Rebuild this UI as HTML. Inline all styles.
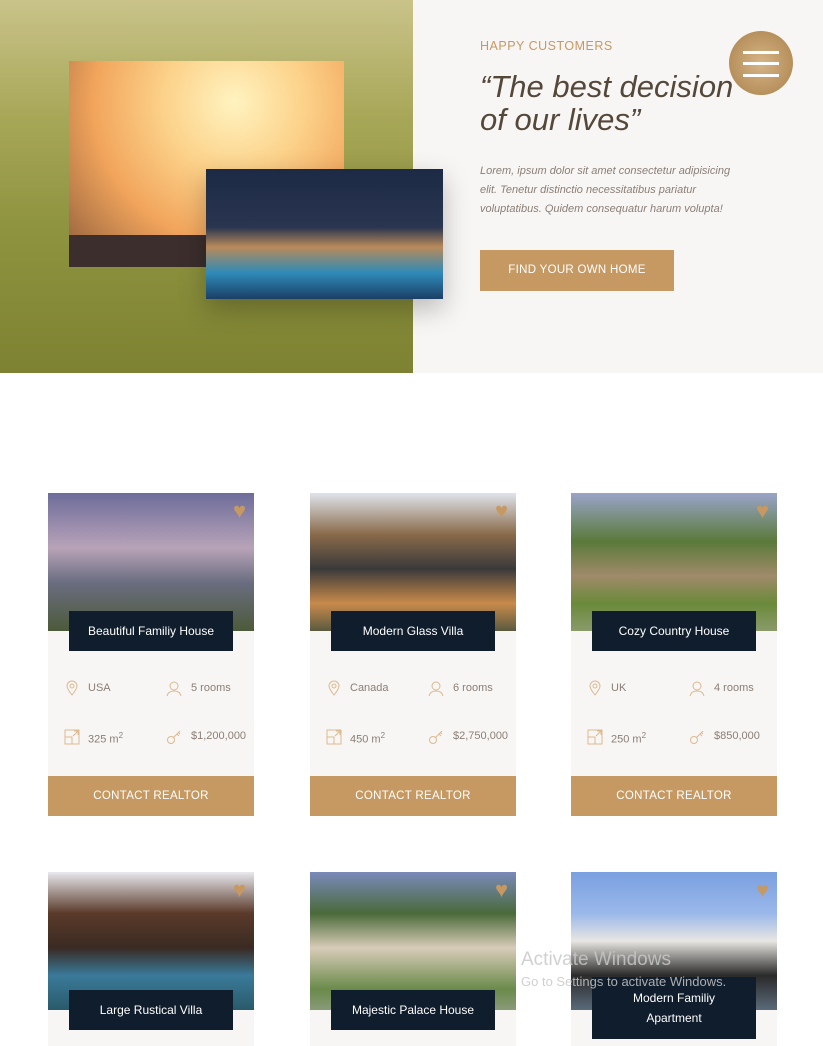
<!DOCTYPE html>
<html style="width:823px;height:1046px;overflow:hidden"><head><style>
*{margin:0;padding:0;box-sizing:border-box}
body{width:823px;height:1046px;overflow:hidden;background:#fff;font-family:"Liberation Sans",sans-serif;position:relative}
.abs{position:absolute}
.hero-l{left:0;top:0;width:413px;height:373px;background:linear-gradient(180deg,#c9c38a 0%,#a9a85a 30%,#8f9440 60%,#7d8232 100%)}
.hero-r{left:413px;top:0;width:410px;height:373px;background:#f8f6f4}
.p1{left:69px;top:61px;width:275px;height:206px;background:radial-gradient(circle at 60% 20%,#fff3c0 0%,#fcd28a 30%,#f2a55c 60%,#8a5a3a 100%)}
.p1 .ground{position:absolute;left:0;bottom:0;width:100%;height:32px;background:#3b2e2c}
.p2{left:206px;top:169px;width:237px;height:130px;background:linear-gradient(180deg,#1c2a46 0%,#2a3550 45%,#b98a5a 60%,#2e8ab8 80%,#1b3f66 100%);box-shadow:0 10px 25px rgba(0,0,0,.25)}
.sub{left:480px;top:39px;color:#c69963;font-size:12.5px;letter-spacing:.5px}
h1{position:absolute;left:480px;top:70px;font-size:31px;font-style:italic;font-weight:normal;color:#54483a;line-height:33px}
.lorem{left:480px;top:162px;width:262px;font-size:11px;font-style:italic;color:#8a7e76;line-height:19px}
.btn{left:480px;top:250px;width:194px;height:41px;background:#c69963;color:#fff;font-size:11.5px;text-align:center;line-height:41px;letter-spacing:.3px}
.menu{left:729px;top:31px;width:64px;height:64px;border-radius:50%;background:radial-gradient(circle,#d6b588 0%,#a98049 100%)}
.menu i{position:absolute;left:14px;width:36px;height:3px;background:#fff}
.card{position:absolute;width:206px;height:323px;background:#f8f6f4}
.card.r2{height:174px}
.card .img{position:absolute;left:0;top:0;width:100%;height:138px}
.card .lbl{position:absolute;left:21px;top:118px;width:164px;height:40px;background:#101d2c;color:#fff;font-size:12px;text-align:center;line-height:40px}
.card .heart{position:absolute;right:8px;top:5px;color:#c69963;font-size:22px}
.card .it{position:absolute;font-size:11px;color:#8a7e76}
.card .cb{position:absolute;left:0;bottom:0;width:100%;height:40px;background:#c69963;color:#fff;font-size:11.5px;text-align:center;line-height:40px;letter-spacing:.3px}
.ic{position:absolute;width:16px;height:16px}
</style></head><body>
<div class="abs hero-l"></div>
<div class="abs hero-r"></div>
<div class="abs p1"><div class="ground"></div></div>
<div class="abs p2"></div>
<div class="abs sub">HAPPY CUSTOMERS</div>
<h1>“The best decision<br>of our lives”</h1>
<div class="abs lorem">Lorem, ipsum dolor sit amet consectetur adipisicing elit. Tenetur distinctio necessitatibus pariatur voluptatibus. Quidem consequatur harum volupta!</div>
<div class="abs btn">FIND YOUR OWN HOME</div>
<div class="abs menu"><i style="top:20px"></i><i style="top:31px"></i><i style="top:43px"></i></div>

<div class="card" style="left:48px;top:493px">
<div class="img" style="background:linear-gradient(180deg,#6d6c9a 0%,#b8a3b8 40%,#6a6d80 65%,#4d5a3a 100%)"></div>
<div class="heart">♥</div><div class="lbl">Beautiful Familiy House</div>
<svg class="ic" style="left:16px;top:187px" viewBox="0 0 16 16" fill="none" stroke="#dcb98f"><path d="M8 15C4 10 3 8 3 6a5 5 0 0 1 10 0c0 2-1 4-5 9z"/><circle cx="8" cy="6" r="2"/></svg>
<div class="it" style="left:40px;top:189px">USA</div>
<svg class="ic" style="left:118px;top:187px" viewBox="0 0 16 16" fill="none" stroke="#dcb98f"><circle cx="8" cy="6" r="4"/><path d="M1 16c1-4 4-5 7-5s6 1 7 5"/></svg>
<div class="it" style="left:143px;top:189px">5 rooms</div>
<svg class="ic" style="left:16px;top:236px" viewBox="0 0 16 16" fill="none" stroke="#dcb98f"><rect x="1" y="1" width="14" height="14"/><path d="M1 8h7v7M9 7l5-5M10 2h4v4"/></svg>
<div class="it" style="left:40px;top:238px">325 m<sup style="font-size:8px">2</sup></div>
<svg class="ic" style="left:118px;top:236px" viewBox="0 0 16 16" fill="none" stroke="#dcb98f"><circle cx="5" cy="11" r="3.5"/><path d="M7.5 8.5L14 2M11 5l2 2M12.5 3.5l1.5 1.5"/></svg>
<div class="it" style="left:143px;top:237px">$1,200,000</div>
<div class="cb">CONTACT REALTOR</div></div>

<div class="card" style="left:310px;top:493px">
<div class="img" style="background:linear-gradient(180deg,#dfe4ec 0%,#8a6a4a 30%,#3a3a3a 55%,#c88a4a 80%,#5a5a40 100%)"></div>
<div class="heart">♥</div><div class="lbl">Modern Glass Villa</div>
<svg class="ic" style="left:16px;top:187px" viewBox="0 0 16 16" fill="none" stroke="#dcb98f"><path d="M8 15C4 10 3 8 3 6a5 5 0 0 1 10 0c0 2-1 4-5 9z"/><circle cx="8" cy="6" r="2"/></svg>
<div class="it" style="left:40px;top:189px">Canada</div>
<svg class="ic" style="left:118px;top:187px" viewBox="0 0 16 16" fill="none" stroke="#dcb98f"><circle cx="8" cy="6" r="4"/><path d="M1 16c1-4 4-5 7-5s6 1 7 5"/></svg>
<div class="it" style="left:143px;top:189px">6 rooms</div>
<svg class="ic" style="left:16px;top:236px" viewBox="0 0 16 16" fill="none" stroke="#dcb98f"><rect x="1" y="1" width="14" height="14"/><path d="M1 8h7v7M9 7l5-5M10 2h4v4"/></svg>
<div class="it" style="left:40px;top:238px">450 m<sup style="font-size:8px">2</sup></div>
<svg class="ic" style="left:118px;top:236px" viewBox="0 0 16 16" fill="none" stroke="#dcb98f"><circle cx="5" cy="11" r="3.5"/><path d="M7.5 8.5L14 2M11 5l2 2M12.5 3.5l1.5 1.5"/></svg>
<div class="it" style="left:143px;top:237px">$2,750,000</div>
<div class="cb">CONTACT REALTOR</div></div>

<div class="card" style="left:571px;top:493px">
<div class="img" style="background:linear-gradient(180deg,#9aa4c8 0%,#5a7a3a 35%,#a08a6a 60%,#6a8a3a 80%,#8a9a6a 100%)"></div>
<div class="heart">♥</div><div class="lbl">Cozy Country House</div>
<svg class="ic" style="left:16px;top:187px" viewBox="0 0 16 16" fill="none" stroke="#dcb98f"><path d="M8 15C4 10 3 8 3 6a5 5 0 0 1 10 0c0 2-1 4-5 9z"/><circle cx="8" cy="6" r="2"/></svg>
<div class="it" style="left:40px;top:189px">UK</div>
<svg class="ic" style="left:118px;top:187px" viewBox="0 0 16 16" fill="none" stroke="#dcb98f"><circle cx="8" cy="6" r="4"/><path d="M1 16c1-4 4-5 7-5s6 1 7 5"/></svg>
<div class="it" style="left:143px;top:189px">4 rooms</div>
<svg class="ic" style="left:16px;top:236px" viewBox="0 0 16 16" fill="none" stroke="#dcb98f"><rect x="1" y="1" width="14" height="14"/><path d="M1 8h7v7M9 7l5-5M10 2h4v4"/></svg>
<div class="it" style="left:40px;top:238px">250 m<sup style="font-size:8px">2</sup></div>
<svg class="ic" style="left:118px;top:236px" viewBox="0 0 16 16" fill="none" stroke="#dcb98f"><circle cx="5" cy="11" r="3.5"/><path d="M7.5 8.5L14 2M11 5l2 2M12.5 3.5l1.5 1.5"/></svg>
<div class="it" style="left:143px;top:237px">$850,000</div>
<div class="cb">CONTACT REALTOR</div></div>

<div class="card r2" style="left:48px;top:872px">
<div class="img" style="background:linear-gradient(180deg,#e8e8ee 0%,#5a3a2a 30%,#3a2a22 55%,#3a7a9a 75%,#2a5a6a 100%)"></div>
<div class="heart">♥</div><div class="lbl">Large Rustical Villa</div></div>
<div class="card r2" style="left:310px;top:872px">
<div class="img" style="background:linear-gradient(180deg,#7a8aba 0%,#4a6a3a 30%,#d8ccb8 55%,#6a8a4a 85%,#8a9a7a 100%)"></div>
<div class="heart">♥</div><div class="lbl">Majestic Palace House</div></div>
<div class="card r2" style="left:571px;top:872px">
<div class="img" style="background:linear-gradient(180deg,#7aa0e0 0%,#9ab8ea 30%,#e8e6e2 50%,#2a2a2a 75%,#5a6a7a 100%)"></div>
<div class="heart">♥</div><div class="lbl" style="line-height:20px;top:105px;height:62px;display:flex;align-items:center;justify-content:center">Modern Familiy<br>Apartment</div></div>
<div class="abs" style="left:521px;top:949px;color:rgba(200,200,200,.85);font-size:19px">Activate Windows</div>
<div class="abs" style="left:521px;top:974px;color:rgba(200,200,200,.85);font-size:13px">Go to Settings to activate Windows.</div>
</body></html>
